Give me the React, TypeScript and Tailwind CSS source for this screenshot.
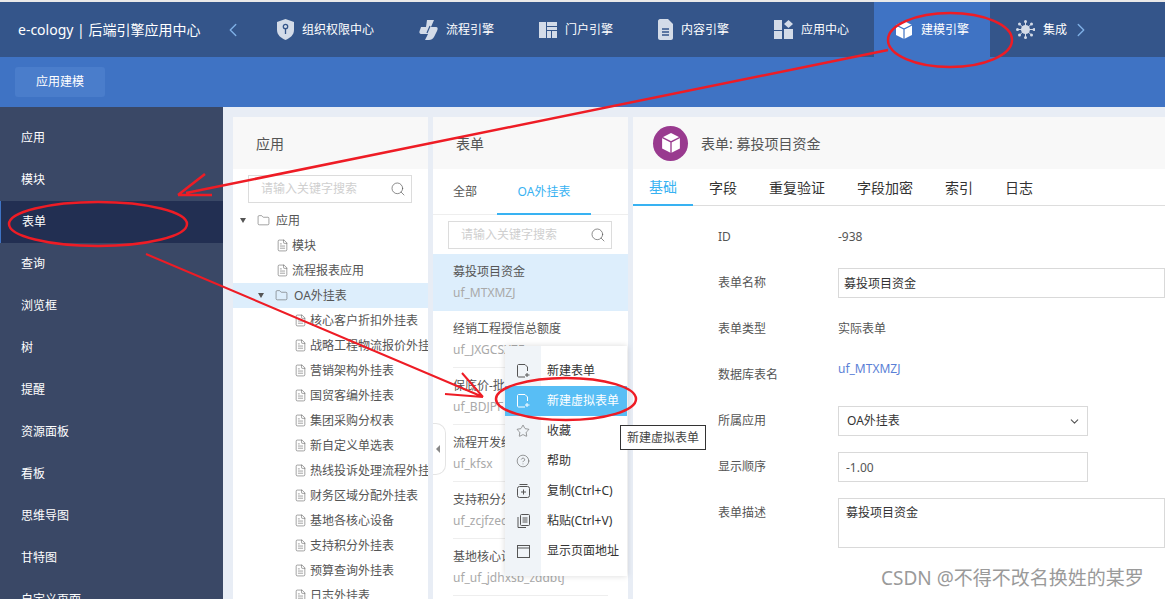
import { ChevronDown, ChevronLeft, ChevronRight, CircleHelp, FileText, Folder, Search, Star } from "lucide-react";
import type { ReactNode } from "react";

const sideItems = ["应用", "模块", "表单", "查询", "浏览框", "树", "提醒", "资源面板", "看板", "思维导图", "甘特图", "自定义页面"];

const subTables = [
	"核心客户折扣外挂表",
	"战略工程物流报价外挂表",
	"营销架构外挂表",
	"国贸客编外挂表",
	"集团采购分权表",
	"新自定义单选表",
	"热线投诉处理流程外挂表",
	"财务区域分配外挂表",
	"基地各核心设备",
	"支持积分外挂表",
	"预算查询外挂表",
	"日志外挂表",
];

const forms = [
	["募投项目资金", "uf_MTXMZJ"],
	["经销工程授信总额度", "uf_JXGCSXZE"],
	["保底价-批发", "uf_BDJPF"],
	["流程开发统计", "uf_kfsx"],
	["支持积分外挂表", "uf_zcjfzedh"],
	["基地核心设备", "uf_uf_jdhxsb_zddbtj"],
];

function ShieldIcon() {
	return (
		<svg width="17" height="21" viewBox="0 0 17 21">
			<path d="M8.5 0 L17 3 V11 C17 16 13 19 8.5 21 C4 19 0 16 0 11 V3 Z" fill="#d3dbe8" />
			<circle cx="8.5" cy="7.5" r="2.2" fill="none" stroke="#34558a" strokeWidth="1.3" />
			<path d="M8.5 9.5 V15" stroke="#34558a" strokeWidth="1.3" />
		</svg>
	);
}

function FlowIcon() {
	return (
		<svg width="19" height="20" viewBox="0 0 19 20">
			<path d="M8 0 H15 L12 7 H17 C19 7 19 9 18 11 L15 17 C14 19 12 20 10 20 H6 L9 14 H3 C0 14 0 12 1 10 L2 7 H7 Z" fill="#d3dbe8" />
			<path d="M11 6 L8 13" stroke="#34558a" strokeWidth="1.2" />
		</svg>
	);
}

function LayoutIcon() {
	return (
		<svg width="18" height="16" viewBox="0 0 18 16" fill="#d3dbe8">
			<rect x="0" y="0" width="7" height="16" />
			<rect x="8" y="0" width="10" height="4" />
			<rect x="8" y="5" width="10" height="3" />
			<rect x="8" y="9" width="4" height="7" />
			<rect x="13" y="9" width="5" height="7" />
		</svg>
	);
}

function DocIcon() {
	return (
		<svg width="15" height="21" viewBox="0 0 15 21">
			<path d="M2 0 H10 L15 5 V19 C15 20 14 21 13 21 H2 C1 21 0 20 0 19 V2 C0 1 1 0 2 0 Z" fill="#d3dbe8" />
			<path d="M4 10 H11 M4 13 H11 M4 16 H11" stroke="#34558a" strokeWidth="1.3" />
		</svg>
	);
}

function AppsIcon() {
	return (
		<svg width="19" height="19" viewBox="0 0 19 19" fill="#d3dbe8">
			<rect x="0" y="0" width="8" height="10" />
			<rect x="0" y="11" width="8" height="8" />
			<rect x="10" y="9" width="9" height="10" />
			<path d="M14.5 0 L19 4 L14.5 8 L10 4 Z" />
		</svg>
	);
}

function CubeIcon({ size, fill, line }: { size: number; fill: string; line: string }) {
	return (
		<svg width={size} height={size} viewBox="0 0 18 18">
			<path d="M9 0 L17 4 V14 L9 18 L1 14 V4 Z" fill={fill} />
			<path d="M1 4 L9 8 L17 4 M9 8 V18" fill="none" stroke={line} strokeWidth="1.2" />
		</svg>
	);
}

function ClusterIcon() {
	const tips = [
		[9.5, 1.5],
		[15.5, 4],
		[18, 9.5],
		[15.5, 15],
		[9.5, 17.5],
		[3.5, 15],
		[1.5, 9.5],
		[3.5, 4],
	];
	return (
		<svg width="19" height="19" viewBox="0 0 19 19" fill="#d3dbe8">
			{tips.map(([x, y]) => (
				<g key={`${x}-${y}`}>
					<line x1="9.5" y1="9.5" x2={x} y2={y} stroke="#d3dbe8" strokeWidth="1" />
					<circle cx={x} cy={y} r="1.5" />
				</g>
			))}
			<circle cx="9.5" cy="9.5" r="4.5" />
		</svg>
	);
}

function FilePlusIcon({ color }: { color: string }) {
	return (
		<svg width="13" height="14" viewBox="0 0 13 14" fill="none" stroke={color} strokeWidth="1">
			<path d="M8 13 H1.5 C1 13 .5 12.5 .5 12 V1.5 C.5 1 1 .5 1.5 .5 H8 L10.5 3 V7" />
			<path d="M10 9 V13 M8 11 H12.5" />
		</svg>
	);
}

function CopyIcon() {
	return (
		<svg width="13" height="14" viewBox="0 0 13 14" fill="none" stroke="#555" strokeWidth="1">
			<rect x=".5" y="2.5" width="12" height="11" rx="2" />
			<path d="M2.5 .5 H10.5 M6.5 5.5 V10.5 M4 8 H9" />
		</svg>
	);
}

function PasteIcon() {
	return (
		<svg width="13" height="14" viewBox="0 0 13 14" fill="none" stroke="#555" strokeWidth="1">
			<rect x="3.5" y=".5" width="9" height="11" rx="1" />
			<path d="M1 3 V13.5 H9 M5.5 4 H10.5 M5.5 6 H10.5 M5.5 8 H10.5" />
		</svg>
	);
}

function PageIcon() {
	return (
		<svg width="13" height="13" viewBox="0 0 13 13" fill="none" stroke="#555" strokeWidth="1">
			<rect x=".5" y=".5" width="12" height="12" />
			<path d="M.5 3 H12.5" />
		</svg>
	);
}

function NavItem({ icon, label, active }: { icon: ReactNode; label: string; active?: boolean }) {
	return (
		<div className={`h-full flex items-center gap-[8px] shrink-0 ${active ? "bg-[#3f73c4] px-[21px]" : ""}`}>
			<span className="flex items-center justify-center">{icon}</span>
			<span>{label}</span>
		</div>
	);
}

function SearchBox() {
	return (
		<div className="h-[28px] w-[164px] border border-[#dcdcdc] flex items-center justify-between pl-[12px] pr-[5px] text-[12px] text-[#cfcfcf]">
			<span>请输入关键字搜索</span>
			<Search size={16} strokeWidth={1} className="text-[#555]" />
		</div>
	);
}

function PanelHeader({ children }: { children: ReactNode }) {
	return <div className="h-[52px] bg-[#f8f8f8] flex items-center text-[14px] text-[#555] shrink-0">{children}</div>;
}

function FormRow({ label, children }: { label: string; children: ReactNode }) {
	return (
		<div className="h-[46px] flex items-center">
			<span className="w-[120px] shrink-0 text-[#555]">{label}</span>
			{children}
		</div>
	);
}

function MenuRow({ icon, label, active }: { icon: ReactNode; label: string; active?: boolean }) {
	return (
		<div className={`h-[30px] flex items-center ${active ? "bg-[#58bef5] text-white" : "text-[#333]"}`}>
			<span className="w-[36px] flex justify-center shrink-0">{icon}</span>
			<span className="ml-[6px]">{label}</span>
		</div>
	);
}

export default function App() {
	return (
		<div className="relative w-[1165px] h-[599px] overflow-hidden bg-[#e8edf5] flex flex-col font-['Noto_Sans','Noto_Sans_CJK_SC',sans-serif] text-[12px]">
			<div className="h-[2px] bg-[#e9e9e9] shrink-0" />

			<header className="h-[55px] bg-[#34558a] text-white flex items-center shrink-0 overflow-hidden">
				<div className="w-[225px] pl-[18px] text-[14px] shrink-0">e-cology | 后端引擎应用中心</div>
				<ChevronLeft size={22} strokeWidth={1.5} className="text-[#7fb0e6] shrink-0 ml-[-3px]" />
				<div className="h-full flex items-center ml-[33px] gap-[45px]">
					<NavItem icon={<ShieldIcon />} label="组织权限中心" />
					<NavItem icon={<FlowIcon />} label="流程引擎" />
					<NavItem icon={<LayoutIcon />} label="门户引擎" />
					<NavItem icon={<DocIcon />} label="内容引擎" />
					<div className="h-full flex items-center">
						<NavItem icon={<AppsIcon />} label="应用中心" />
						<div className="w-[25px]" />
						<NavItem icon={<CubeIcon size={18} fill="#ffffff" line="#3f73c4" />} label="建模引擎" active />
						<div className="w-[26px]" />
						<NavItem icon={<ClusterIcon />} label="集成" />
						<ChevronRight size={22} strokeWidth={1.5} className="text-[#7fb0e6] ml-[3px]" />
					</div>
				</div>
			</header>

			<div className="h-[50px] bg-[#3f73c4] flex items-center pl-[15px] shrink-0">
				<div className="w-[90px] h-[30px] rounded-[3px] bg-[#4a7dcb] text-white flex items-center justify-center">应用建模</div>
			</div>

			<div className="flex flex-1 min-h-0">
				<aside className="w-[223px] bg-[#3a4866] text-white shrink-0 pt-[10px]">
					{sideItems.map((item) => (
						<div
							key={item}
							className={`h-[42px] flex items-center pl-[21px] ${item === "表单" ? "bg-[#222f52] border-l border-[#3f73c4] pl-[20px]" : ""}`}
						>
							{item}
						</div>
					))}
				</aside>

				<main className="flex-1 min-w-0 flex gap-[5px] pl-[10px] pt-[10px]">
					<section className="w-[195px] bg-white flex flex-col overflow-hidden shrink-0">
						<PanelHeader>
							<span className="pl-[23px]">应用</span>
						</PanelHeader>
						<div className="pl-[15px] mt-[6px]">
							<SearchBox />
						</div>
						<div className="mt-[5px] text-[#555] whitespace-nowrap">
							<div className="h-[25px] flex items-center pl-[7px]">
								<span className="w-0 h-0 border-x-[3.5px] border-x-transparent border-t-[5px] border-t-[#555]" />
								<Folder size={13} strokeWidth={1} className="ml-[11px]" />
								<span className="ml-[6px]">应用</span>
							</div>
							<div className="h-[25px] flex items-center pl-[43px]">
								<FileText size={13} strokeWidth={1} />
								<span className="ml-[3px]">模块</span>
							</div>
							<div className="h-[25px] flex items-center pl-[43px]">
								<FileText size={13} strokeWidth={1} />
								<span className="ml-[3px]">流程报表应用</span>
							</div>
							<div className="h-[25px] flex items-center pl-[25px] bg-[#ddeefc]">
								<span className="w-0 h-0 border-x-[3.5px] border-x-transparent border-t-[5px] border-t-[#555]" />
								<Folder size={13} strokeWidth={1} className="ml-[11px]" />
								<span className="ml-[6px]">OA外挂表</span>
							</div>
							{subTables.map((name) => (
								<div key={name} className="h-[25px] flex items-center pl-[61px]">
									<FileText size={13} strokeWidth={1} className="shrink-0" />
									<span className="ml-[3px]">{name}</span>
								</div>
							))}
						</div>
					</section>

					<section className="w-[195px] bg-white flex flex-col overflow-hidden shrink-0">
						<PanelHeader>
							<span className="pl-[23px]">表单</span>
						</PanelHeader>
						<div className="h-[46px] border-b border-[#eeeeee] flex items-end shrink-0 text-[12px]">
							<div className="w-[64px] h-full flex items-center pl-[20px] text-[#555]">全部</div>
							<div className="w-[94px] h-full flex items-center justify-center text-[#38b2f2] border-b-2 border-[#38b2f2] mb-[-1px]">OA外挂表</div>
						</div>
						<div className="pl-[15px] mt-[6px]">
							<SearchBox />
						</div>
						<div className="mt-[5px]">
							{forms.map(([name, code], i) => (
								<div key={code} className={`h-[57px] pt-[8px] ${i === 0 ? "bg-[#ddeefc]" : ""}`}>
									<div className={`mx-[20px] ${i > 0 ? "h-[49px] border-b border-[#eeeeee]" : ""}`}>
										<div className="leading-[20px] text-[#555] whitespace-nowrap">{name}</div>
										<div className="leading-[20px] mt-[1px] text-[#a9a9a9] whitespace-nowrap">{code}</div>
									</div>
								</div>
							))}
						</div>
					</section>

					<section className="flex-1 min-w-0 bg-white flex flex-col overflow-hidden">
						<PanelHeader>
							<span className="ml-[20px] w-[35px] h-[35px] rounded-full bg-[#993a8f] flex items-center justify-center">
								<CubeIcon size={20} fill="#ffffff" line="#993a8f" />
							</span>
							<span className="ml-[13px]">表单: 募投项目资金</span>
						</PanelHeader>
						<div className="h-[37px] border-b border-[#dddddd] flex text-[14px] text-[#333] shrink-0">
							<div className="w-[60px] flex items-center justify-center text-[#38b2f2] border-b-2 border-[#38b2f2] mb-[-1px]">基础</div>
							<div className="px-[16px] flex items-center">字段</div>
							<div className="px-[16px] flex items-center">重复验证</div>
							<div className="px-[16px] flex items-center">字段加密</div>
							<div className="px-[16px] flex items-center">索引</div>
							<div className="px-[16px] flex items-center">日志</div>
						</div>
						<div className="pl-[85px] pt-[8px] text-[#333]">
							<FormRow label="ID">
								<span className="text-[#555]">-938</span>
							</FormRow>
							<FormRow label="表单名称">
								<input readOnly value="募投项目资金" className="w-[340px] h-[30px] border border-[#d9d9d9] px-[5px] outline-none text-[#333]" />
							</FormRow>
							<FormRow label="表单类型">
								<span className="text-[#555]">实际表单</span>
							</FormRow>
							<FormRow label="数据库表名">
								<span className="text-[#5b7fd6] mt-[-12px]">uf_MTXMZJ</span>
							</FormRow>
							<FormRow label="所属应用">
								<div className="w-[250px] h-[30px] border border-[#d9d9d9] flex items-center justify-between pl-[8px] pr-[6px]">
									<span>OA外挂表</span>
									<ChevronDown size={13} strokeWidth={2} className="text-[#555]" />
								</div>
							</FormRow>
							<FormRow label="显示顺序">
								<input readOnly value="-1.00" className="w-[250px] h-[30px] border border-[#d9d9d9] px-[7px] outline-none text-[#555]" />
							</FormRow>
							<div className="flex mt-[8px]">
								<span className="w-[120px] shrink-0 text-[#555] mt-[6px]">表单描述</span>
								<textarea readOnly value="募投项目资金" className="w-[340px] h-[50px] border border-[#d9d9d9] px-[7px] py-[5px] outline-none resize-none text-[#333]" />
							</div>
						</div>
					</section>
				</main>
			</div>

			<div className="absolute left-[433px] top-[423px] w-[13px] h-[52px] bg-white border border-l-0 border-[#e4e4e4] rounded-r-[10px] flex items-center pl-[3px]">
				<span className="w-0 h-0 border-y-[4px] border-y-transparent border-r-[4px] border-r-[#888]" />
			</div>

			<div className="absolute left-[505px] top-[346px] w-[122px] h-[230px] bg-white shadow-[0_0_6px_rgba(0,0,0,0.15)] py-[10px]">
				<div className="absolute left-0 top-0 bottom-0 w-[36px] bg-[#f0f4f8]" />
				<div className="relative">
					<MenuRow icon={<FilePlusIcon color="#555" />} label="新建表单" />
					<MenuRow icon={<FilePlusIcon color="#ffffff" />} label="新建虚拟表单" active />
					<MenuRow icon={<Star size={14} strokeWidth={1} className="text-[#555]" />} label="收藏" />
					<MenuRow icon={<CircleHelp size={14} strokeWidth={1} className="text-[#555]" />} label="帮助" />
					<MenuRow icon={<CopyIcon />} label="复制(Ctrl+C)" />
					<MenuRow icon={<PasteIcon />} label="粘贴(Ctrl+V)" />
					<MenuRow icon={<PageIcon />} label="显示页面地址" />
				</div>
			</div>

			<div className="absolute left-[620px] top-[425px] h-[25px] px-[6px] bg-white border border-[#333] text-[#444] flex items-center whitespace-nowrap">新建虚拟表单</div>

			<svg className="absolute left-0 top-0 pointer-events-none" width="1165" height="599" fill="none" stroke="#ee1c25">
				<ellipse cx="950" cy="40" rx="62" ry="27" strokeWidth="2.5" />
				<ellipse cx="98" cy="224" rx="89" ry="22" strokeWidth="2.5" />
				<ellipse cx="566" cy="399" rx="70" ry="21" strokeWidth="2.5" />
				<path d="M888 50 L186 193 M178 195 L205 174 M178 195 L212 195" strokeWidth="2.5" />
				<path d="M146 254 L483 397 M483 397 L462 373 M483 397 L445 394" strokeWidth="2" />
			</svg>

			<div className="absolute left-[881px] top-[565px] text-[19px] leading-[26px] text-[#9a9a9a] whitespace-nowrap">CSDN @不得不改名换姓的某罗</div>
		</div>
	);
}
